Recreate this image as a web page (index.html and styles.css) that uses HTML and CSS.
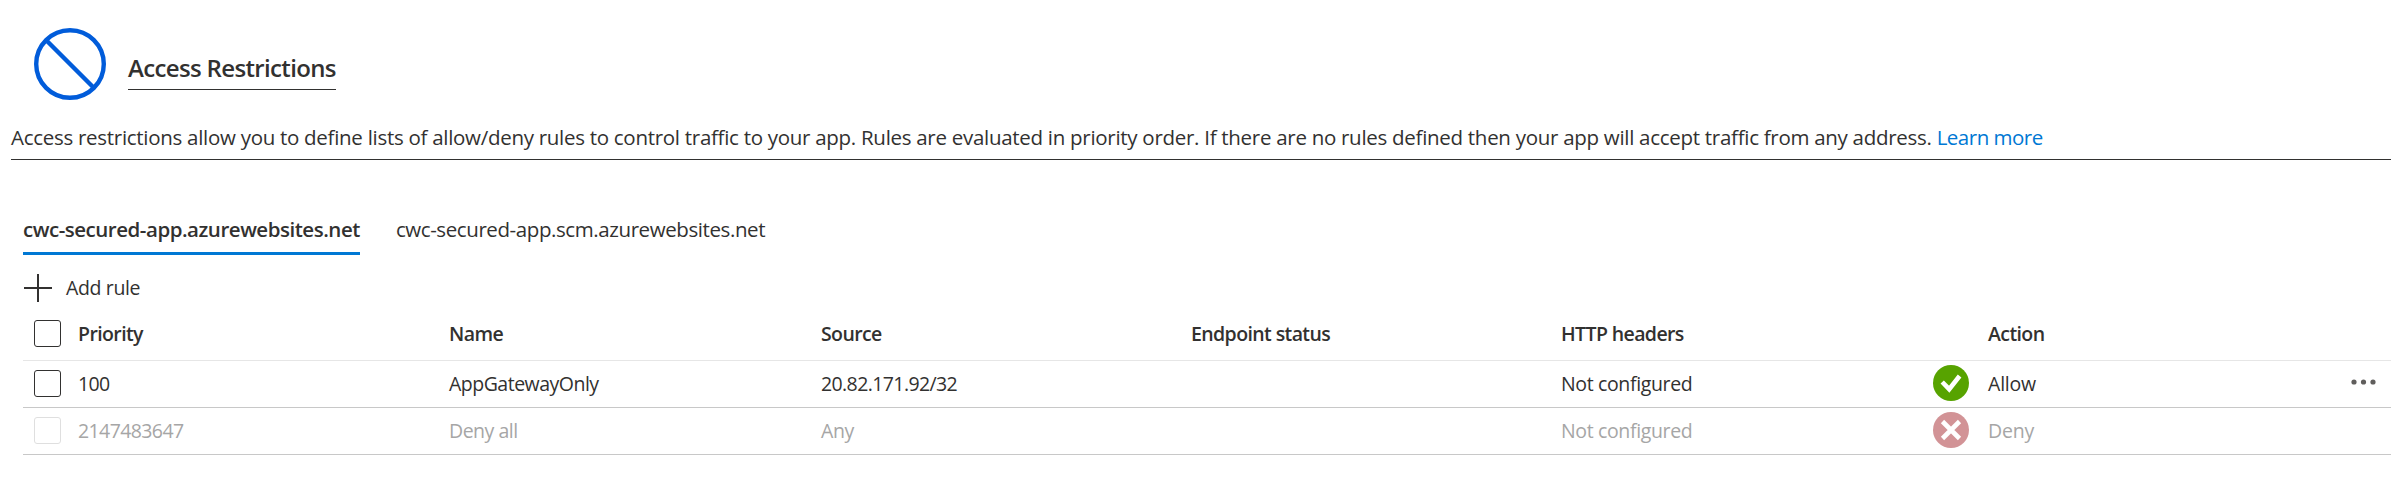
FILE: index.html
```html
<!DOCTYPE html>
<html lang="en">
<head>
<meta charset="utf-8">
<title>Access Restrictions</title>
<link rel="stylesheet" href="styles.css">
</head>
<body>
<header class="header">
  <svg class="ban" viewBox="0 0 72 72"><circle cx="36" cy="36" r="33.8"/><path d="M12 12 60 60"/></svg>
  <h1 class="title">Access Restrictions</h1>
</header>
<p class="desc">Access restrictions allow you to define lists of allow/deny rules to control traffic to your app. Rules are evaluated in priority order. If there are no rules defined then your app will accept traffic from any address. <a class="link">Learn more</a></p>
<main class="content">
  <nav class="tabs">
    <a class="tab tab-active">cwc-secured-app.azurewebsites.net</a>
    <a class="tab">cwc-secured-app.scm.azurewebsites.net</a>
  </nav>
  <button class="add"><svg class="plus" viewBox="0 0 28 28"><path d="M0 14H28M14 0V28"/></svg><span class="add-label">Add rule</span></button>
  <div class="table">
    <div class="row head">
      <span class="check"></span>
      <span>Priority</span>
      <span>Name</span>
      <span>Source</span>
      <span>Endpoint status</span>
      <span>HTTP headers</span>
      <span></span>
      <span>Action</span>
      <span></span>
    </div>
    <div class="row">
      <span class="check"></span>
      <span class="number">100</span>
      <span class="name">AppGatewayOnly</span>
      <span class="number">20.82.171.92/32</span>
      <span></span>
      <span>Not configured</span>
      <svg class="status" viewBox="0 0 36 36"><circle class="ok" cx="18" cy="18" r="18"/><path class="mark" d="M9.2 17 16.2 24.2 26.6 11"/></svg>
      <span class="action">Allow</span>
      <svg class="more" viewBox="0 0 25 6"><circle cx="3" cy="3" r="2.6"/><circle cx="12.5" cy="3" r="2.6"/><circle cx="22" cy="3" r="2.6"/></svg>
    </div>
    <div class="row disabled">
      <span class="check"></span>
      <span class="number">2147483647</span>
      <span class="name">Deny all</span>
      <span>Any</span>
      <span></span>
      <span>Not configured</span>
      <svg class="status" viewBox="0 0 36 36"><circle class="no" cx="18" cy="18" r="18"/><path class="mark" d="M9.5 9.5 26.5 26.5M26.5 9.5 9.5 26.5"/></svg>
      <span class="action">Deny</span>
      <span></span>
    </div>
  </div>
</main>
</body>
</html>
```
FILE: styles.css
```css
* { box-sizing: border-box; }
body {
  margin: 0;
  background: #fff;
  color: #323130;
  font-family: "Open Sans", "Noto Sans", sans-serif;
  font-size: 19.5px;
  letter-spacing: -0.36px;
  white-space: nowrap;
}
.header { display: flex; align-items: flex-start; gap: 22px; height: 110px; padding: 28px 0 0 34px; }
.ban { width: 72px; height: 72px; fill: none; stroke: #015cda; stroke-width: 4.4; }
.title { margin: 22px 0 0; height: 40px; border-bottom: 1px solid #323130; font-size: 24px; line-height: 35px; font-weight: 600; letter-spacing: -0.65px; }
.desc { margin: 0 17px 0 11px; height: 50px; padding-top: 12px; border-bottom: 1px solid #323130; font-size: 20.5px; line-height: 30px; letter-spacing: -0.286px; }
.link { color: #0078d4; letter-spacing: -0.5px; }
.content { padding: 54px 17px 0 23px; }
.tabs { display: flex; gap: 36px; height: 41px; font-size: 20.5px; line-height: 30px; letter-spacing: -0.41px; }
.tab-active { font-weight: 600; letter-spacing: -0.475px; border-bottom: 3px solid #0078d4; }
.add { display: flex; align-items: center; gap: 14px; height: 28px; margin: 19px 0 0 1px; padding: 0; border: 0; background: none; color: inherit; font: inherit; letter-spacing: inherit; }
.add-label { padding-bottom: 1px; }
.plus { width: 28px; height: 28px; fill: none; stroke: #323130; stroke-width: 2; }
.row {
  display: grid;
  grid-template-columns: 44px 371px 372px 370px 370px 372px 55px 363px 25px;
  align-items: center;
  height: 47px;
  padding: 0 0 2px 11px;
  border-bottom: 1px solid #c8c8c8;
}
.head { height: 59px; padding: 5px 0 0 11px; font-weight: 600; letter-spacing: -0.6px; border-bottom-color: #e6e6e6; }
.number { letter-spacing: -0.6px; }
.name { letter-spacing: -0.5px; }
.action { letter-spacing: -0.2px; }
.check { width: 27px; height: 27px; border: 1px solid #323130; border-radius: 3px; }
.status { width: 36px; height: 36px; }
.ok { fill: #57a300; }
.no { fill: #d29396; }
.mark { fill: none; stroke: #fff; stroke-width: 4.6; }
.more { width: 25px; height: 6px; margin-bottom: 3px; fill: #605e5c; }
.disabled { color: #a6a6a6; }
.disabled .check { border-color: #dfdfdf; }
```
